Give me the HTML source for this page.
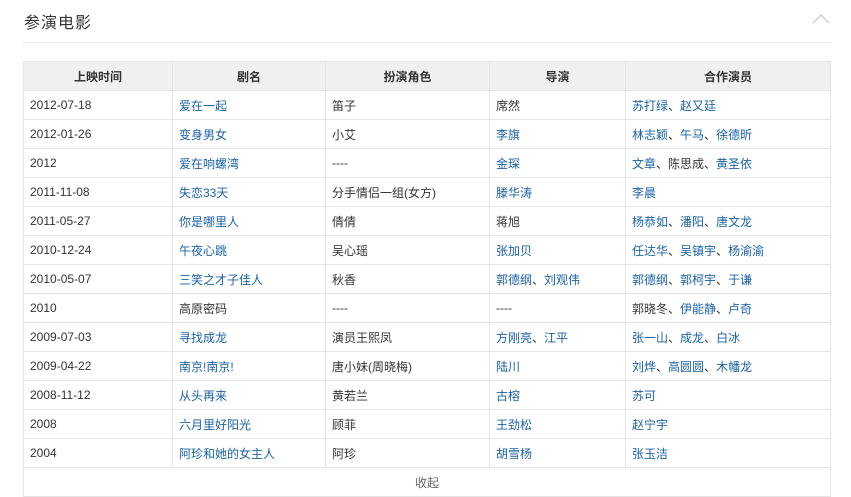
<!DOCTYPE html>
<html><head><meta charset="utf-8"><style>
body{margin:0;width:851px;height:478px;overflow:hidden;background:#fff;font-family:"Liberation Sans","Noto Sans CJK SC",sans-serif;font-size:12px;color:#333;position:relative}
.title{position:absolute;left:24px;top:9px;font-size:16px;color:#333;letter-spacing:1px}
.line{position:absolute;left:23px;top:42px;width:807px;height:1px;background:#e6e6e6}
.chev{position:absolute;left:812px;top:13px}
table{position:absolute;left:23px;top:61px;border-collapse:collapse;width:807px;table-layout:fixed}
td,th{border:1px solid #e4e4e4;height:28px;padding:0 0 0 6px;text-align:left;white-space:nowrap;overflow:hidden}
th{background:#f0f0f0;text-align:center;font-weight:bold;color:#333;padding:0}
a{color:#136ec2;color:#1a62a8;text-decoration:none}
.more td{text-align:center;color:#666}
</style></head><body>
<div class="title">参演电影</div>
<svg class="chev" width="18" height="12"><path d="M1 10 L9 2 L17 10" fill="none" stroke="#ccc" stroke-width="1.3"/></svg>
<div class="line"></div>
<table>
<colgroup><col style="width:149px"><col style="width:153px"><col style="width:164px"><col style="width:136px"><col style="width:205px"></colgroup>
<tr><th>上映时间</th><th>剧名</th><th>扮演角色</th><th>导演</th><th>合作演员</th></tr>
<tr><td>2012-07-18</td><td><a>爱在一起</a></td><td>笛子</td><td>席然</td><td><a>苏打绿</a>、<a>赵又廷</a></td></tr>
<tr><td>2012-01-26</td><td><a>变身男女</a></td><td>小艾</td><td><a>李旗</a></td><td><a>林志颖</a>、<a>午马</a>、<a>徐德昕</a></td></tr>
<tr><td>2012</td><td><a>爱在响螺湾</a></td><td>----</td><td><a>金琛</a></td><td><a>文章</a>、陈思成、<a>黄圣依</a></td></tr>
<tr><td>2011-11-08</td><td><a>失恋33天</a></td><td>分手情侣一组(女方)</td><td><a>滕华涛</a></td><td><a>李晨</a></td></tr>
<tr><td>2011-05-27</td><td><a>你是哪里人</a></td><td>倩倩</td><td>蒋旭</td><td><a>杨恭如</a>、<a>潘阳</a>、<a>唐文龙</a></td></tr>
<tr><td>2010-12-24</td><td><a>午夜心跳</a></td><td>吴心瑶</td><td><a>张加贝</a></td><td><a>任达华</a>、<a>吴镇宇</a>、<a>杨渝渝</a></td></tr>
<tr><td>2010-05-07</td><td><a>三笑之才子佳人</a></td><td>秋香</td><td><a>郭德纲</a>、<a>刘观伟</a></td><td><a>郭德纲</a>、<a>郭柯宇</a>、<a>于谦</a></td></tr>
<tr><td>2010</td><td>高原密码</td><td>----</td><td>----</td><td>郭晓冬、<a>伊能静</a>、<a>卢奇</a></td></tr>
<tr><td>2009-07-03</td><td><a>寻找成龙</a></td><td>演员王熙凤</td><td><a>方刚亮</a>、<a>江平</a></td><td><a>张一山</a>、<a>成龙</a>、<a>白冰</a></td></tr>
<tr><td>2009-04-22</td><td><a>南京!南京!</a></td><td>唐小妹(周晓梅)</td><td><a>陆川</a></td><td><a>刘烨</a>、<a>高圆圆</a>、<a>木幡龙</a></td></tr>
<tr><td>2008-11-12</td><td><a>从头再来</a></td><td>黄若兰</td><td><a>古榕</a></td><td><a>苏可</a></td></tr>
<tr><td>2008</td><td><a>六月里好阳光</a></td><td>顾菲</td><td><a>王劲松</a></td><td><a>赵宁宇</a></td></tr>
<tr><td>2004</td><td><a>阿珍和她的女主人</a></td><td>阿珍</td><td><a>胡雪杨</a></td><td><a>张玉洁</a></td></tr>
<tr class="more"><td colspan="5" style="padding:0">收起</td></tr>
</table>
</body></html>
